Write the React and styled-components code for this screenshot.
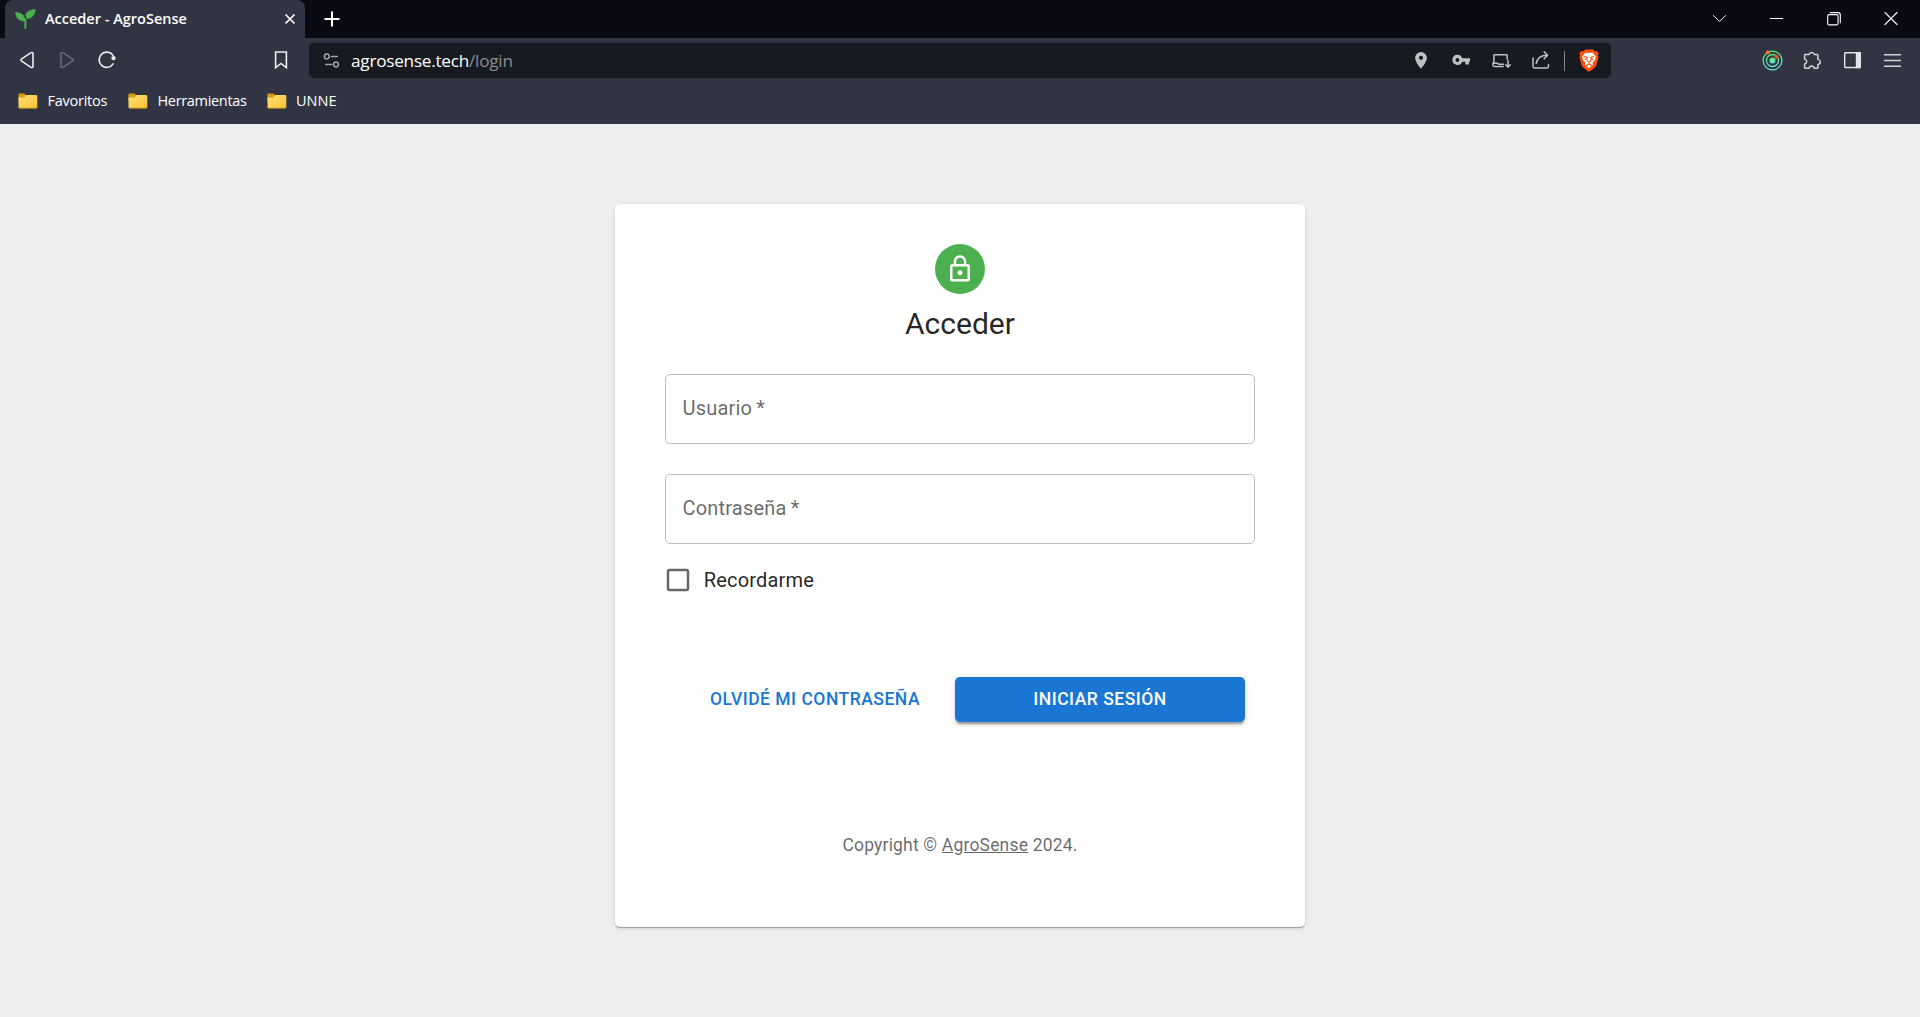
import React from "react";
import styled, { createGlobalStyle } from "styled-components";

const GlobalStyle = createGlobalStyle`
  * { box-sizing: border-box; }
  html, body { margin: 0; padding: 0; }
  body { background: #eee; overflow: hidden; }
  button, input { font: inherit; margin: 0; border: 0; padding: 0; background: none; color: inherit; }
`;

const uiFont = `"Segoe UI", "Open Sans", "Noto Sans", sans-serif`;

const Window = styled.div`
  display: flex;
  flex-direction: column;
  width: 1920px;
  height: 1017px;
  background: #eee;
`;

/* ---------- Browser chrome ---------- */

const Chrome = styled.header`
  display: flex;
  flex-direction: column;
  height: 124px;
  background: #313443;
  font-family: ${uiFont};
  color: #fff;
`;

const TabStrip = styled.div`
  display: flex;
  height: 38px;
  padding-left: 5px;
  background: #0a0a14;
`;

const Tab = styled.div`
  display: flex;
  align-items: center;
  width: 300px;
  height: 38px;
  padding: 0 9px 0 10px;
  border-radius: 8px 8px 0 0;
  background: #313443;
`;

const TabTitle = styled.span`
  flex: 1;
  margin-left: 9px;
  font-size: 14.5px;
  font-weight: 600;
  line-height: 20px;
  white-space: nowrap;
`;

const IconButton = styled.button`
  display: flex;
  align-items: center;
  justify-content: center;
  flex: none;
  width: ${(p) => p.$w || 40}px;
  height: ${(p) => p.$h || 36}px;
  color: ${(p) => p.$color || "#ececee"};
`;

const Spacer = styled.div`
  flex: 1;
`;

const WindowControls = styled.div`
  display: flex;
  margin-right: 1px;
`;

const Toolbar = styled.div`
  display: flex;
  align-items: center;
  height: 45px;
  padding: 0 8px 1px 7px;
`;

const NavButtons = styled.div`
  display: flex;
  width: 254px;
`;

const AddressBar = styled.div`
  display: flex;
  align-items: center;
  width: 1302px;
  height: 35px;
  margin: 1px 0 0 8px;
  padding: 0 6px 1px 2px;
  border-radius: 5px;
  background: #181a21;
`;

const Url = styled.div`
  padding-top: 2px;
  font-size: 17.2px;
  line-height: 24px;
  letter-spacing: -0.25px;
  color: #fff;
  white-space: nowrap;
`;

const UrlPath = styled.span`
  color: #8b8c91;
`;

const Divider = styled.div`
  width: 1px;
  height: 20px;
  margin: 2px 8px 0 3px;
  background: #85868b;
`;

const BookmarksBar = styled.nav`
  display: flex;
  height: 36px;
  padding-left: 18px;
`;

const Bookmark = styled.a`
  display: flex;
  align-items: center;
  width: ${(p) => p.$w}px;
  font-size: 14.5px;
  line-height: 20px;
  letter-spacing: ${(p) => p.$track};
  white-space: nowrap;
`;

const BookmarkLabel = styled.span`
  margin-left: 9.5px;
`;

/* ---------- Login page ---------- */

const Page = styled.main`
  display: flex;
  flex: 1;
  align-items: flex-start;
  justify-content: center;
  padding-top: 80px;
  font-family: Roboto, sans-serif;
  color: rgba(0, 0, 0, 0.87);
`;

const Card = styled.section`
  display: flex;
  flex-direction: column;
  align-items: center;
  width: 690px;
  height: 723px;
  padding: 40px 50px 0;
  border-radius: 5px;
  background: #fff;
  box-shadow: 0 2px 1px -1px rgba(0, 0, 0, 0.2), 0 1px 1px rgba(0, 0, 0, 0.14),
    0 1px 4px rgba(0, 0, 0, 0.12);
`;

const Avatar = styled.div`
  display: flex;
  align-items: center;
  justify-content: center;
  width: 50px;
  height: 50px;
  border-radius: 50%;
  background: #4caf50;
  color: #fff;
`;

const Title = styled.h1`
  margin: 10px 0 30px;
  font-size: 30px;
  font-weight: 400;
  line-height: 40px;
`;

const Form = styled.form`
  display: flex;
  flex-direction: column;
  width: 100%;
`;

const Field = styled.label`
  display: flex;
  height: 70px;
  margin-bottom: 30px;
  padding: 19px 16.5px;
  border: 1px solid #c0c0c0;
  border-radius: 5px;
  font-size: 20px;
  line-height: 28.75px;
  letter-spacing: 0.1876px;
  word-spacing: -1px;
  color: rgba(0, 0, 0, 0.6);
`;

const Remember = styled.label`
  display: flex;
  align-items: center;
  gap: 11.25px;
  height: 52px;
  margin: -20px 0 0 -2.5px;
  font-size: 20px;
  line-height: 30px;
  letter-spacing: 0.1876px;
`;

const CheckGlyph = styled.svg`
  flex: none;
  width: 30px;
  height: 30px;
  fill: rgba(0, 0, 0, 0.6);
`;

const Actions = styled.div`
  display: flex;
  justify-content: flex-end;
  gap: 25px;
  margin-top: 71px;
  padding-right: 10px;
`;

const Button = styled.button`
  width: ${(p) => p.$w}px;
  height: 45px;
  padding-bottom: 1px;
  border-radius: 5px;
  font-size: 17.5px;
  font-weight: 500;
  line-height: 30px;
  letter-spacing: 0.5px;
  text-transform: uppercase;
  white-space: nowrap;
  color: ${(p) => (p.$contained ? "#fff" : "#1976d2")};
  background: ${(p) => (p.$contained ? "#1976d2" : "transparent")};
  box-shadow: ${(p) =>
    p.$contained
      ? "0 3.75px 1.25px -2.5px rgba(0,0,0,.2), 0 2.5px 2.5px rgba(0,0,0,.14), 0 1.25px 6.25px rgba(0,0,0,.12)"
      : "none"};
`;

const Copyright = styled.p`
  margin: 111px 0 0;
  font-size: 17.5px;
  line-height: 25px;
  letter-spacing: 0.1876px;
  color: rgba(0, 0, 0, 0.6);
`;

const SiteLink = styled.a`
  text-decoration: underline;
`;

/* ---------- Icons ---------- */

const Svg = ({ w = 20, h = 20, sw = 1.5, children, ...rest }) => (
  <svg
    width={w}
    height={h}
    viewBox={`0 0 ${w} ${h}`}
    fill="none"
    stroke="currentColor"
    strokeWidth={sw}
    strokeLinecap="round"
    strokeLinejoin="round"
    {...rest}
  >
    {children}
  </svg>
);

const Sprout = () => (
  <Svg w={21} h={20} stroke="none">
    <path d="M0.2 3C5.6 2.6 10.4 6.2 10.6 12.4C4.8 12.8 0.4 9.2 0.2 3Z" fill="#4caf50" />
    <path d="M20.6 0.2C20.6 5.8 16.8 9.6 12 9.9C11.6 8.2 11 7 10.2 5.9C11.8 2.4 15.4 0.1 20.6 0.2Z" fill="#4caf50" />
    <path d="M9.4 9.5H11.4V19.2Q11.4 20 10.4 20Q9.4 20 9.4 19.2Z" fill="#4caf50" />
  </Svg>
);

const Folder = () => (
  <svg width="20" height="16" viewBox="0 0 20 16">
    <defs>
      <linearGradient id="folder" x1="0" y1="0" x2="1" y2="1">
        <stop offset="0" stopColor="#ffe27c" />
        <stop offset="1" stopColor="#fbc02f" />
      </linearGradient>
    </defs>
    <path d="M1.5 0.5H6.5L8.5 2.5H18V8H0.5V1.5Q0.5 0.5 1.5 0.5Z" fill="#dc9a0c" />
    <path d="M0.5 4.5H6.5L8.3 2H18Q19.3 2 19.3 3.2V14Q19.3 15.2 18 15.2H1.8Q0.5 15.2 0.5 14Z" fill="url(#folder)" />
    <path d="M1.2 15.1H18.6" stroke="#d69a1c" strokeWidth="0.8" />
  </svg>
);

const Triangle = ({ flip }) => (
  <Svg sw={1.6}>
    <path
      transform={flip ? "matrix(-1 0 0 1 20 0)" : undefined}
      d="M4.4 9.1L13.6 2.9Q16 1.6 16 4.1V15.9Q16 18.4 13.6 17.1L4.4 10.9Q3.4 10 4.4 9.1Z"
    />
  </Svg>
);

const Reload = () => (
  <Svg sw={1.7}>
    <path d="M16.1 13.9A7.6 7.6 0 1 1 15.9 5.3" />
    <circle cx="16.5" cy="8.1" r="2.2" fill="currentColor" stroke="none" />
  </Svg>
);

const Ribbon = () => (
  <Svg sw={1.6} strokeLinejoin="miter">
    <path d="M4.6 2H15.4V17.7L10 13.4L4.6 17.7Z" />
  </Svg>
);

const Tune = () => (
  <Svg sw={1.5}>
    <circle cx="5.8" cy="6.5" r="2.4" />
    <path d="M10.4 6.5H16.4M4.6 14.5H10.8" />
    <circle cx="15" cy="14.5" r="2.4" />
  </Svg>
);

const Pin = () => (
  <Svg stroke="none">
    <path
      fill="currentColor"
      fillRule="evenodd"
      d="M10 1.9A5.9 5.9 0 0 0 4.1 7.8C4.1 12.3 10 18.7 10 18.7S15.9 12.3 15.9 7.8A5.9 5.9 0 0 0 10 1.9ZM10 9.9A2.1 2.1 0 1 1 10 5.7A2.1 2.1 0 0 1 10 9.9Z"
    />
  </Svg>
);

const Key = () => (
  <Svg stroke="none">
    <path
      fill="currentColor"
      fillRule="evenodd"
      d="M6.4 4.8A5.1 5.1 0 0 1 11.2 8.2H19V11.8H17.9V14.6H14.3V11.8H11.2A5.1 5.1 0 1 1 6.4 4.8ZM6.4 8.1A1.9 1.9 0 1 0 6.4 11.9A1.9 1.9 0 1 0 6.4 8.1Z"
    />
  </Svg>
);

const Install = () => (
  <Svg sw={1.5}>
    <path d="M2.9 13V5.2Q2.9 4.7 3.4 4.7H15.6Q16.2 4.7 16.2 5.2V9" />
    <path d="M1.9 13.3H6.6L7.6 14.3H12.4M1.9 13.3V14.8Q1.9 16.4 3.4 16.4H12.2" />
    <path d="M17 10.6V16.8M14.7 14.8L17 17.1L19.3 14.8" />
  </Svg>
);

const Share = () => (
  <Svg sw={1.5}>
    <path d="M2 8V16.3Q2 17.9 3.5 17.9H16Q17.5 17.9 17.5 16.3V14.4" />
    <path d="M5.2 13.6C6 7.8 9.6 5.2 16.6 5.2M13.2 1.9L16.6 5.2L13.2 8.8" />
  </Svg>
);

const BraveLion = () => (
  <svg width="20" height="23" viewBox="0 0 20 23">
    <path
      fill="#fb4f0d"
      d="M6 0.4H14L15.8 2.3L18 2L19.6 4.4L19 6.3L19.6 8L17.4 16.2Q17 17.7 15.8 18.6L11 22.2Q10 22.9 9 22.2L4.2 18.6Q3 17.7 2.6 16.2L0.4 8L1 6.3L0.4 4.4L2 2L4.2 2.3Z"
    />
    <path
      fill="#fff"
      d="M6.4 3.6L8.4 4L10 3.7L11.6 4L13.6 3.6L16.9 7.4L16.2 9.2L16.5 10.4L13.4 13.8L14 15.4L13.2 16.4L12 15.3L10 14.3L8 15.3L6.8 16.4L6 15.4L6.6 13.8L3.5 10.4L3.8 9.2L3.1 7.4Z"
    />
    <path fill="#fff" d="M10 15.6L12.6 17.2L10 19.2L7.4 17.2Z" />
    <path
      fill="none"
      stroke="#fb4f0d"
      strokeWidth="1.1"
      d="M4.8 7.6L8.2 8.4L7.6 9.6L8.5 12.2L10 13.2L11.5 12.2L12.4 9.6L11.8 8.4L15.2 7.6M10 13V14.6M5.6 10.2L7 10.6M14.4 10.2L13 10.6"
    />
  </svg>
);

const Orbit = () => (
  <svg width="22" height="22" viewBox="0 0 22 22">
    <defs>
      <linearGradient id="orbit" x1="0" y1="0" x2="0" y2="1">
        <stop offset="0" stopColor="#62e36b" />
        <stop offset="1" stopColor="#5fe3dc" />
      </linearGradient>
    </defs>
    <g fill="none" stroke="url(#orbit)" strokeWidth="1.3">
      <circle cx="11.5" cy="11.5" r="9.4" />
      <circle cx="11.5" cy="11.5" r="6" />
    </g>
    <circle cx="11.5" cy="11.5" r="3" fill="url(#orbit)" />
    <circle cx="6.8" cy="3.5" r="2" fill="#f4792b" />
    <circle cx="15.5" cy="7.7" r="2" fill="#ee5226" />
  </svg>
);

const Puzzle = () => (
  <Svg sw={1.5}>
    <path d="M2.6 5.2Q2.6 4.6 3.2 4.6H7Q7.7 2.6 9.7 2.6T12.3 4.6H15.2Q15.9 4.6 15.9 5.2V9.4Q18.4 10.2 18.4 12T15.9 14.5V17.7Q15.9 18.3 15.2 18.3H12.2Q11.6 16 9.6 16T7 18.3H3.2Q2.6 18.3 2.6 17.7V13.9Q4.8 13.3 4.8 11.5T2.6 9.1Z" />
  </Svg>
);

const SidePanel = () => (
  <Svg sw={1.4}>
    <rect x="2.7" y="2.7" width="15.5" height="14.8" rx="0.6" />
    <path fill="currentColor" stroke="none" d="M13.8 2H18.9V18.2H13.8Z" />
  </Svg>
);

const Menu = () => (
  <Svg sw={1.5} strokeLinecap="butt">
    <path d="M2 4.8H19M2 10.5H19M2 16.2H19" />
  </Svg>
);

const LockIcon = () => (
  <svg width="30" height="30" viewBox="0 0 24 24" fill="currentColor">
    <path d="M12 17c1.1 0 2-.9 2-2s-.9-2-2-2-2 .9-2 2 .9 2 2 2zm6-9h-1V6c0-2.76-2.24-5-5-5S7 3.24 7 6v2H6c-1.1 0-2 .9-2 2v10c0 1.1.9 2 2 2h12c1.1 0 2-.9 2-2V10c0-1.1-.9-2-2-2zM8.9 6c0-1.71 1.39-3.1 3.1-3.1s3.1 1.39 3.1 3.1v2H8.9V6zM18 20H6V10h12v10z" />
  </svg>
);

const bookmarks = [
  { label: "Favoritos", width: 110, track: "-0.25px" },
  { label: "Herramientas", width: 138.5, track: "-0.33px" },
  { label: "UNNE", width: 80, track: "0px" },
];

const fields = ["Usuario *", "Contraseña *"];

function BrowserChrome() {
  return (
    <Chrome>
      <TabStrip>
        <Tab>
          <Sprout />
          <TabTitle>Acceder - AgroSense</TabTitle>
          <Svg w={12} h={12} sw={1.7} strokeLinecap="butt">
            <path d="M1.5 1.5L10.5 10.5M10.5 1.5L1.5 10.5" />
          </Svg>
        </Tab>
        <IconButton $w={54} $h={38} $color="#fff">
          <Svg w={16} h={16} sw={2} strokeLinecap="butt">
            <path d="M8 0.5V15.5M0.5 8H15.5" />
          </Svg>
        </IconButton>
        <Spacer />
        <WindowControls>
          <IconButton $w={57} $h={38}>
            <Svg w={14} h={14} sw={1}>
              <path d="M0.5 3.5L6.5 9.5L12.5 3.5" />
            </Svg>
          </IconButton>
          <IconButton $w={57} $h={38} $color="#fff">
            <Svg w={14} h={14} sw={1} strokeLinecap="butt">
              <path d="M0 6.5H13" />
            </Svg>
          </IconButton>
          <IconButton $w={57} $h={38} $color="#fff">
            <Svg w={14} h={14} sw={1.1}>
              <rect x="0.7" y="2.6" width="10.3" height="10.3" rx="1.5" />
              <path d="M3.2 0.6H11Q13.3 0.6 13.3 2.9V10.6" />
            </Svg>
          </IconButton>
          <IconButton $w={57} $h={38}>
            <Svg w={14} h={14} sw={1.2}>
              <path d="M1 0.5L13 12.5M13 0.5L1 12.5" />
            </Svg>
          </IconButton>
        </WindowControls>
      </TabStrip>
      <Toolbar>
        <NavButtons>
          <IconButton><Triangle /></IconButton>
          <IconButton $color="#666876"><Triangle flip /></IconButton>
          <IconButton><Reload /></IconButton>
        </NavButtons>
        <IconButton><Ribbon /></IconButton>
        <AddressBar>
          <IconButton $color="#a0a1a6"><Tune /></IconButton>
          <Url>
            agrosense.tech<UrlPath>/login</UrlPath>
          </Url>
          <Spacer />
          <IconButton $color="#bfc0c1"><Pin /></IconButton>
          <IconButton $color="#bfc0c1"><Key /></IconButton>
          <IconButton $color="#bfc0c1"><Install /></IconButton>
          <IconButton $color="#bfc0c1"><Share /></IconButton>
          <Divider />
          <IconButton $w={32}><BraveLion /></IconButton>
        </AddressBar>
        <Spacer />
        <IconButton><Orbit /></IconButton>
        <IconButton $color="#d4d4d8"><Puzzle /></IconButton>
        <IconButton $color="#e4e4e6"><SidePanel /></IconButton>
        <IconButton $color="#d4d4d8"><Menu /></IconButton>
      </Toolbar>
      <BookmarksBar>
        {bookmarks.map((b) => (
          <Bookmark key={b.label} $w={b.width} $track={b.track}>
            <Folder />
            <BookmarkLabel>{b.label}</BookmarkLabel>
          </Bookmark>
        ))}
      </BookmarksBar>
    </Chrome>
  );
}

export default function App() {
  return (
    <Window>
      <GlobalStyle />
      <BrowserChrome />
      <Page>
        <Card>
          <Avatar>
            <LockIcon />
          </Avatar>
          <Title>Acceder</Title>
          <Form>
            {fields.map((label) => (
              <Field key={label}>{label}</Field>
            ))}
            <Remember>
              <CheckGlyph viewBox="0 0 24 24">
                <path d="M19 5v14H5V5h14m0-2H5c-1.1 0-2 .9-2 2v14c0 1.1.9 2 2 2h14c1.1 0 2-.9 2-2V5c0-1.1-.9-2-2-2z" />
              </CheckGlyph>
              Recordarme
            </Remember>
            <Actions>
              <Button type="button" $w={230}>Olvidé mi contraseña</Button>
              <Button type="button" $w={290} $contained>Iniciar sesión</Button>
            </Actions>
          </Form>
          <Copyright>
            Copyright © <SiteLink>AgroSense</SiteLink> 2024.
          </Copyright>
        </Card>
      </Page>
    </Window>
  );
}
